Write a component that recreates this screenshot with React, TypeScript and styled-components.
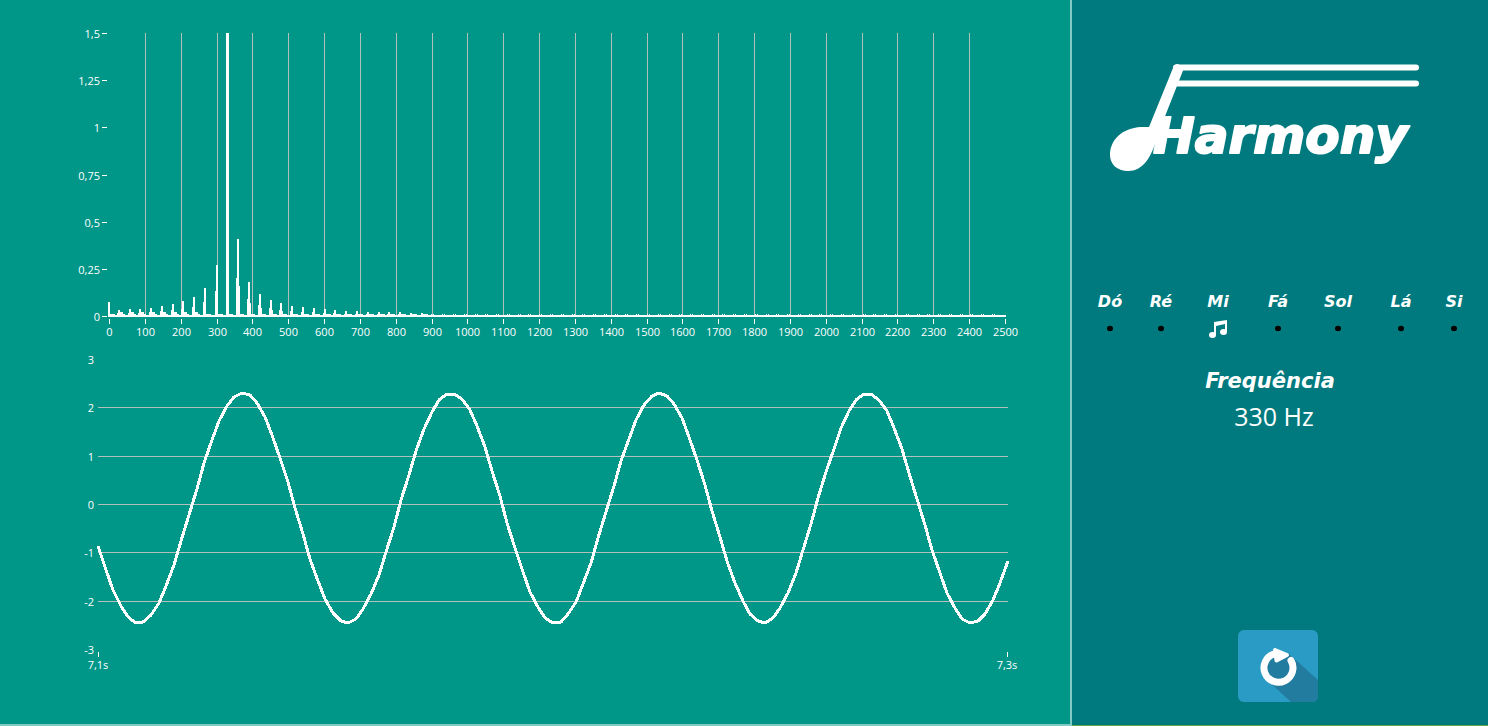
import React from "react";
import styled, { createGlobalStyle } from "styled-components";

const GlobalStyle = createGlobalStyle`
  *, *::before, *::after { box-sizing: border-box; }
  body { margin: 0; background: #007a7e; font-family: "Open Sans", "Noto Sans", sans-serif; }
`;

const Page = styled.div`
  display: grid;
  grid-template-columns: minmax(0, 1fr) 416px;
  min-height: 100vh;
`;

const Charts = styled.main`
  background: #009688;
  border-right: 2px solid #80cbc4;
  border-bottom: 2px solid #80cbc4;
`;

const Chart = styled.svg`
  display: block;
  width: 100%;
  height: auto;
`;

const AxisLabel = styled.text`
  fill: #fff;
  font: 11px "Open Sans", "Noto Sans", sans-serif;
`;

const GridLine = styled.line`
  stroke: #b4c0bc;
  shape-rendering: crispEdges;
`;

const Tick = styled.line`
  stroke: #fff;
  shape-rendering: crispEdges;
`;

const Sidebar = styled.aside`
  display: flex;
  flex-direction: column;
  align-items: center;
  padding: 56px 12px 23px;
  background: #007a7e;
  border-bottom: 1px solid #6aa84f;
  color: #fff;
`;

const Logo = styled.svg`
  display: block;
  width: 320px;
  height: 136px;
  margin-right: 40px;
`;

const LogoText = styled.text`
  font: italic bold 50px "DejaVu Sans", sans-serif;
  fill: #fff;
  stroke: #fff;
  stroke-width: 2px;
  stroke-linejoin: round;
`;

const Notes = styled.ul`
  display: grid;
  grid-template-columns: 52fr 50fr 64fr 56fr 64fr 62fr 44fr;
  width: 100%;
  margin: 98px 0 0;
  padding: 0;
  list-style: none;
`;

const Note = styled.li`
  display: flex;
  flex-direction: column;
  align-items: center;
  gap: 5px;
  font: italic bold 16px/24px "DejaVu Sans", sans-serif;
`;

const Marker = styled.svg`
  display: block;
  width: 20px;
  height: 20px;
`;

const Reading = styled.section`
  display: flex;
  flex-direction: column;
  align-items: center;
  margin: 26px 20px 0 0;
`;

const ReadingTitle = styled.h2`
  margin: 0;
  font: italic bold 21px/32px "DejaVu Sans", sans-serif;
`;

const ReadingValue = styled.p`
  margin: 1px 0 0 8px;
  font-size: 25px;
  line-height: 36px;
`;

const ResetButton = styled.button`
  margin: auto 4px 0 0;
  padding: 0;
  width: 80px;
  height: 72px;
  border: 0;
  border-radius: 6px;
  background: #2a9bc4;
  overflow: hidden;
  cursor: pointer;
`;

const ResetIcon = styled.svg`
  display: block;
  width: 80px;
  height: 72px;
`;

const BASE = 317;
const levels = ["1,5", "1,25", "1", "0,75", "0,5", "0,25", "0"];
const peaks = [
  15, 7, 8, 8, 9, 11, 13, 16, 20, 29, 52, 284, 78, 35, 23, 17, 14, 11, 10, 9, 8,
  7, 6, 6, 5, 5, 5, 5, 4, 4, 3, 3, 3, 3, 3, 3,
];

function Spectrum() {
  const bars: React.ReactNode[] = [];
  for (let i = 0; i < 83; i++) {
    const h = peaks[i] ?? 3;
    const wide = h > 200;
    const x = (wide || i < 10 && i > 0 ? 107 : 108) + Math.round(i * 10.78);
    bars.push(
      <g key={i}>
        <rect x={x} y={BASE - h} width={wide ? 3 : i > 29 ? 1 : 2} height={h} />
        {i > 0 && i < 30 && !wide && (
          <rect x={x - 1} y={BASE - Math.round(h / 2)} width={1} height={Math.round(h / 2)} />
        )}
        {i > 11 && h > 12 && (
          <rect x={x + 2} y={BASE - Math.round(h * 0.4)} width={1} height={Math.round(h * 0.4)} />
        )}
        {i > 0 && i < 9 && <rect x={x + 2} y={BASE - 5} width={3} height={5} />}
        <rect x={x + 2} y={BASE - 3} width={i > 29 ? 1 : 5} height={3} />
      </g>
    );
  }
  return (
    <Chart viewBox="0 0 1070 345" role="img" aria-label="Espectro">
      {Array.from({ length: 26 }, (_, i) => {
        const x = Math.round(109 + i * 35.84) + 0.5;
        return (
          <g key={i}>
            {i > 0 && i < 25 && <GridLine x1={x} x2={x} y1={33} y2={316} />}
            <Tick x1={x} x2={x} y1={319} y2={324} />
            <AxisLabel x={x} y={336} textAnchor="middle">{i * 100}</AxisLabel>
          </g>
        );
      })}
      {levels.map((label, i) => {
        const y = Math.round(33 + i * 47.2) + 0.5;
        return (
          <g key={label}>
            <Tick x1={102} x2={107} y1={y} y2={y} />
            <AxisLabel x={100} y={y + 4} textAnchor="end">{label}</AxisLabel>
          </g>
        );
      })}
      <g fill="#fff" shapeRendering="crispEdges">
        <rect x={109} y={315} width={897} height={2} />
        {bars}
      </g>
    </Chart>
  );
}

const wave = (() => {
  const points: string[] = [];
  for (let x = 98; x <= 1008; x += 7.583) {
    const y = 163 - 115 * Math.cos(((x - 243) / 208.2) * 2 * Math.PI);
    points.push(`${Math.round(x)},${Math.round(y)}`);
  }
  return points.join(" ");
})();

function Waveform() {
  return (
    <Chart viewBox="0 0 1070 379" role="img" aria-label="Forma de onda">
      {[3, 2, 1, 0, -1, -2, -3].map((value, i) => {
        const y = Math.round(14 + i * 48.36) + 0.5;
        return (
          <g key={value}>
            {Math.abs(value) < 3 && <GridLine x1={98} x2={1008} y1={y} y2={y} />}
            <AxisLabel x={94} y={y + 4} textAnchor="end">{value}</AxisLabel>
          </g>
        );
      })}
      <Tick x1={98.5} x2={98.5} y1={307} y2={312} />
      <Tick x1={1007.5} x2={1007.5} y1={307} y2={312} />
      <AxisLabel x={98} y={324} textAnchor="middle">7,1s</AxisLabel>
      <AxisLabel x={1007} y={324} textAnchor="middle">7,3s</AxisLabel>
      <polyline points={wave} fill="none" stroke="#fff" strokeWidth={3} strokeLinejoin="round" shapeRendering="crispEdges" />
    </Chart>
  );
}

const notes = ["Dó", "Ré", "Mi", "Fá", "Sol", "Lá", "Si"];

export default function App() {
  return (
    <>
      <GlobalStyle />
      <Page>
        <Charts>
          <Spectrum />
          <Waveform />
        </Charts>
        <Sidebar>
          <Logo viewBox="0 0 320 136" role="img" aria-label="Harmony">
            <g fill="none" stroke="#fff" strokeLinecap="round" strokeLinejoin="round">
              <path d="M316 11.500H76" strokeWidth={6} />
              <path d="M316 27.500H76" strokeWidth={6} />
            </g>
            <path d="M73 12Q74 8 78 8L84 12L62 68L57 82C51 102 43 115 28 115C17 115 10 108 10 99C10 84 22 72 41 71H49Z" fill="#fff" />
            <LogoText x={53} y={97}>Harmony</LogoText>
          </Logo>
          <Notes>
            {notes.map((note) => (
              <Note key={note}>
                {note}
                <Marker viewBox="0 0 20 20" aria-hidden="true">
                  {note === "Mi" ? (
                    <g fill="#fff">
                      <path d="M6 3L19 1V13H17V5L8 7V16H6Z" />
                      <ellipse cx="4.500" cy="16" rx="3.500" ry="3" />
                      <ellipse cx="15.500" cy="13" rx="3.500" ry="3" />
                    </g>
                  ) : (
                    <ellipse cx="10" cy="9.500" rx="3" ry="2.800" fill="#000" />
                  )}
                </Marker>
              </Note>
            ))}
          </Notes>
          <Reading>
            <ReadingTitle>Frequência</ReadingTitle>
            <ReadingValue>330 Hz</ReadingValue>
          </Reading>
          <ResetButton type="button" aria-label="Reiniciar">
            <ResetIcon viewBox="0 0 80 72" aria-hidden="true">
              <path d="M50 23L80 50V72H53L28 49Z" fill="#227c9f" />
              <circle cx="40.500" cy="37.500" r="14" fill="#227c9f" />
              <path d="M53 30.500A14.500 14.500 0 1 1 36 24" fill="none" stroke="#fff" strokeWidth="7" strokeLinecap="round" />
              <path d="M37 20L49 25L38.500 30.500Z" fill="#fff" stroke="#fff" strokeWidth="4" strokeLinejoin="round" />
            </ResetIcon>
          </ResetButton>
        </Sidebar>
      </Page>
    </>
  );
}
